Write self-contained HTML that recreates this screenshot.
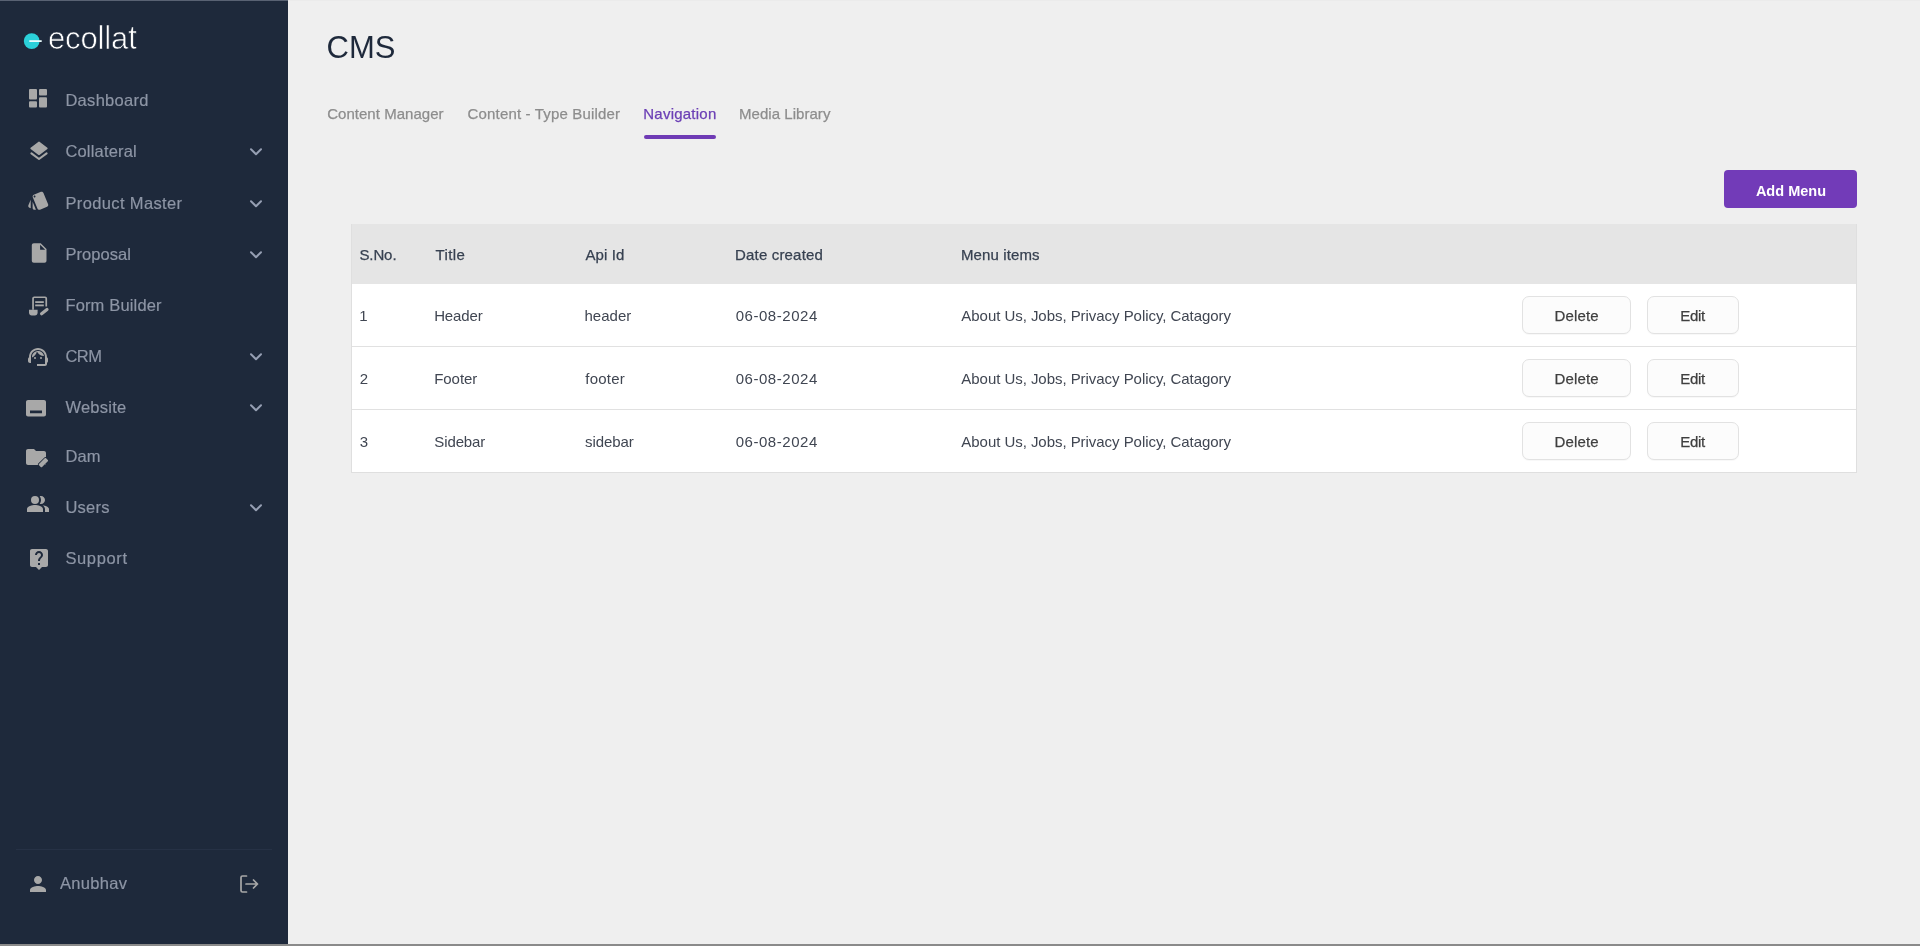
<!DOCTYPE html>
<html lang="en">
<head>
<meta charset="utf-8">
<title>CMS - Navigation</title>
<style>
*{box-sizing:border-box;margin:0;padding:0}
html,body{width:1920px;height:946px;overflow:hidden}
body{font-family:"Liberation Sans",Arial,sans-serif;background:#efefef;position:relative;color:#1f2937}
.topline{position:absolute;left:0;top:0;width:288px;height:1px;background:#596273;z-index:5}
.topline2{position:absolute;left:288px;top:0;width:1632px;height:1px;background:#ebebeb;z-index:5}
.botline{position:absolute;left:0;top:944.400px;width:1920px;height:1.600px;background:#8a8a8a;z-index:5}
.side{will-change:transform;position:absolute;left:0;top:0;width:288px;height:946px;background:#1e293b}
.logo{position:absolute;left:0;top:0}
.brand{position:absolute;left:48px;top:19px;height:40px;font-size:31px;line-height:40px;color:#fff;white-space:nowrap;-webkit-text-stroke:.7px #1e293b;letter-spacing:-.15px}
.brand span{display:inline-block}
.brand .tl{transform:scaleY(1.07);transform-origin:50% 79.500%}
.nav{position:absolute;left:0;width:288px;height:24px;color:#8d95a5;font-size:16.5px;line-height:24px;white-space:nowrap}
.nav svg.ic{position:absolute;left:26px;top:0;width:24px;height:24px;fill:#a8a8a8}
.nav span{position:absolute;left:65.4px;top:-1px;-webkit-text-stroke:.18px #8d95a5}
.nav svg.ch{position:absolute;left:248.050px;top:3.900px;width:16px;height:16px;fill:none;stroke:#969fb3;stroke-width:2;stroke-linecap:round;stroke-linejoin:round}
.divider{position:absolute;left:16px;top:849px;width:256px;height:1px;background:#263145}
.user{position:absolute;left:0;top:872px;width:288px;height:24px;color:#8d95a5;font-size:16.5px;line-height:24px}
.main{will-change:transform;position:absolute;left:288px;top:0;width:1632px;height:946px}
h1{position:absolute;font-size:31px;line-height:40px;font-weight:400;color:#1e293b;white-space:nowrap}
.tabs{position:absolute;left:39px;top:104px;height:36px;font-size:15px;color:#8d8d8d;white-space:nowrap}
.tab{position:absolute;line-height:20px;-webkit-text-stroke:.25px #8d8d8d}
.tab.act{color:#6b3fb5;-webkit-text-stroke:.25px #6b3fb5}
.tab.act i{position:absolute;left:.55px;width:71.900px;top:30.900px;height:3.400px;border-radius:2px;background:#6f3bb5}
.btn-add{position:absolute;left:1436px;top:170.200px;width:133px;height:37.800px;border-radius:4px;background:#723bb8;color:#fff;font-weight:700;font-size:14.5px;line-height:40px;white-space:nowrap}
.btn-add span{position:absolute}
.table{position:absolute;left:63px;top:224px;width:1506px;height:249px;border:1px solid #dfdfdf;background:#fff}
.thead{position:absolute;left:0;top:-1px;width:1504px;height:60px;background:#e5e5e5;color:#374151;font-size:15px}
.thead .c{-webkit-text-stroke:.25px #374151}
.row{position:absolute;left:0;width:1504px;height:63px;border-bottom:1px solid #e1e1e1;font-size:15px;color:#404652}
.row.last{border-bottom:0;height:62px}
.c{position:absolute;line-height:20px;white-space:nowrap}
.b{position:absolute;top:12.100px;height:37.900px;border:1px solid #e2e2e2;border-radius:7px;background:#fcfcfc;box-shadow:0 1px 1px rgba(0,0,0,.03);line-height:38px;font-size:15px;color:#3f3f3f;white-space:nowrap}
.b span{position:absolute;-webkit-text-stroke:.25px #3f3f3f}
</style>
</head>
<body>
<div class="side">
<svg class="logo" width="60" height="70" viewBox="0 0 60 70">
<circle cx="31.700" cy="41.100" r="7.900" fill="#2bd0d9"/>
<rect x="29.300" y="40.200" width="12.400" height="1.800" fill="#e9fbfc"/>
</svg>
<div class="brand"><span>eco</span><span class="tl">ll</span><span>a</span><span class="tl">t</span></div>
<div class="nav" style="top:89px"><svg class="ic" style="left:26.4px;top:-2.7px" viewBox="0 0 24 24"><rect x="3" y="3" width="8" height="10.400" rx="1"/><rect x="3" y="15.200" width="8" height="6.300" rx="1"/><rect x="13" y="3" width="8" height="6.400" rx="1"/><rect x="13" y="11.300" width="8" height="10.200" rx="1"/></svg><span style="letter-spacing:0.3px">Dashboard</span></div>
<div class="nav" style="top:140px"><svg class="ic" style="left:26.6px;top:-0.7px" viewBox="0 0 24 24"><path d="M12 3.300L19.900 9.300 12 15.300 4.100 9.300z" stroke="#a8a8a8" stroke-width="1.500" stroke-linejoin="round"/><path d="M4.400 14.300L12 20 19.600 14.300" fill="none" stroke="#a8a8a8" stroke-width="2.100" stroke-linecap="round" stroke-linejoin="round"/></svg><span style="letter-spacing:0.18px">Collateral</span><svg class="ch" viewBox="0 0 16 16"><path d="M3 5.2l5 5 5-5"/></svg></div>
<div class="nav" style="top:192px"><svg class="ic" style="left:26.9px;top:-3.1px;width:23px;height:23px" viewBox="0 0 24 24"><path d="M2.53 19.65l1.34.56v-9.03l-2.43 5.86c-.41 1.02.08 2.19 1.09 2.61zM5.88 19.75c0 1.1.9 2 2 2h1.45l-3.45-8.34v6.340z"/><path stroke="#1e293b" stroke-width="1.300" paint-order="stroke fill" fill-rule="evenodd" d="M22.030 15.950L17.070 3.980c-.310-.750-1.040-1.210-1.810-1.230-.260 0-.530.040-.790.150L7.100 5.950c-.750.310-1.210 1.030-1.230 1.800-.010.270.040.540.150.800l4.960 11.970c.310.760 1.050 1.220 1.830 1.230.260 0 .520-.050.770-.150l7.360-3.050c1.020-.420 1.510-1.590 1.090-2.600zM7.880 8.750c-.550 0-1-.450-1-1s.450-1 1-1 1 .450 1 1-.450 1-1 1z"/></svg><span style="letter-spacing:0.37px">Product Master</span><svg class="ch" viewBox="0 0 16 16"><path d="M3 5.2l5 5 5-5"/></svg></div>
<div class="nav" style="top:243px"><svg class="ic" style="left:26.6px;top:-2px" viewBox="0 0 24 24"><path d="M6.800 2.200c-1.100 0-2 .9-2 2v15.600c0 1.100.9 2 2 2h10.700c1.100 0 2-.9 2-2V8l-5.800-5.800H6.800zm6.300 6.600V3.700l5.100 5.100h-5.100z"/></svg><span style="letter-spacing:0.05px">Proposal</span><svg class="ch" viewBox="0 0 16 16"><path d="M3 5.2l5 5 5-5"/></svg></div>
<div class="nav" style="top:294px"><svg class="ic" style="left:26px;top:0px" viewBox="0 0 24 24"><path fill="none" stroke="#a8a8a8" stroke-width="1.700" d="M7.050 15.800V4.400c0-.65.5-1.150 1.150-1.150h10.900c.65 0 1.150.5 1.150 1.150v8.100"/><rect x="9.200" y="7.200" width="8.600" height="1.800"/><rect x="9.200" y="10.500" width="8.600" height="1.800"/><path d="M3 15.800h8.600v3c0 1.500-1.200 2.700-2.700 2.700H5.700C4.200 21.500 3 20.300 3 18.800z"/><path fill="none" stroke="#a8a8a8" stroke-width="3.200" stroke-linecap="round" d="M15.600 19.800L21 15.500"/></svg><span style="letter-spacing:0.16px">Form Builder</span></div>
<div class="nav" style="top:345px"><svg class="ic" style="left:26px;top:0px" viewBox="0 0 24 24"><path d="M21 12.220C21 6.730 16.740 3 12 3c-4.690 0-9 3.650-9 9.280-.6.340-1 .980-1 1.720v2c0 1.100.9 2 2 2h1v-6.100c0-3.870 3.130-7 7-7s7 3.130 7 7V19h-8v2h8c1.100 0 2-.9 2-2v-1.220c.590-.310 1-.920 1-1.640v-2.300c0-.7-.410-1.310-1-1.620z"/><circle cx="9" cy="13" r="1"/><circle cx="15" cy="13" r="1"/><path d="M18 11.030C17.520 8.180 15.040 6 12.050 6c-3.030 0-6.290 2.510-6.030 6.450 2.470-1.010 4.330-3.210 4.860-5.890 1.310 2.630 4 4.440 7.120 4.470z"/></svg><span style="letter-spacing:-0.5px">CRM</span><svg class="ch" viewBox="0 0 16 16"><path d="M3 5.2l5 5 5-5"/></svg></div>
<div class="nav" style="top:396px"><svg class="ic" style="left:26px;top:-0.4px" viewBox="0 0 24 24"><path fill-rule="evenodd" d="M2 4h16c1.100 0 2 .9 2 2v12.500c0 1.100-.9 2-2 2H2c-1.100 0-2-.9-2-2V6c0-1.100.9-2 2-2zm2 10.500v2.800h12v-2.800z"/></svg><span style="letter-spacing:0.25px">Website</span><svg class="ch" viewBox="0 0 16 16"><path d="M3 5.2l5 5 5-5"/></svg></div>
<div class="nav" style="top:445px"><svg class="ic" style="left:24px;top:0.2px" viewBox="0 0 24 24"><path d="M10 4H4c-1.100 0-1.990.9-1.990 2L2 18c0 1.100.9 2 2 2h18V8c0-1.100-.9-2-2-2h-8l-2-2z"/><path stroke="#1e293b" stroke-width="1.500" paint-order="stroke fill" d="M22.100 13.200l1.700 1.700c.4.400.4 1 0 1.400l-5.700 5.700c-.4.400-1 .4-1.400 0L15 20.300c-.4-.4-.4-1 0-1.400l5.700-5.700c.4-.4 1-.4 1.400 0z"/></svg><span style="letter-spacing:0.1px">Dam</span></div>
<div class="nav" style="top:496px"><svg class="ic" style="left:26px;top:-4px" viewBox="0 0 24 24"><path d="M16.670 13.130C18.040 14.060 19 15.320 19 17v3h4v-3c0-2.180-3.570-3.470-6.330-3.870z"/><circle cx="9" cy="8" r="4"/><path d="M15 12c2.210 0 4-1.790 4-4s-1.790-4-4-4c-.470 0-.910.100-1.330.240C14.500 5.270 15 6.580 15 8s-.5 2.730-1.330 3.760c.420.140.860.240 1.330.240zM9 13c-2.670 0-8 1.340-8 4v3h16v-3c0-2.660-5.330-4-8-4z"/></svg><span style="letter-spacing:0.25px">Users</span><svg class="ch" viewBox="0 0 16 16"><path d="M3 5.2l5 5 5-5"/></svg></div>
<div class="nav" style="top:547px"><svg class="ic" style="left:26.5px;top:-0.1px" viewBox="0 0 24 24"><path d="M19 2H5c-1.110 0-2 .9-2 2v14c0 1.100.89 2 2 2h4l3 3 3-3h4c1.100 0 2-.9 2-2V4c0-1.100-.9-2-2-2zm-6 16h-2v-2h2v2zm2.070-7.750l-.9.920C13.450 11.900 13 12.500 13 14h-2v-.5c0-1.100.450-2.100 1.170-2.830l1.240-1.260c.370-.360.590-.860.590-1.410 0-1.100-.9-2-2-2s-2 .9-2 2H8c0-2.210 1.790-4 4-4s4 1.790 4 4c0 .880-.360 1.680-.930 2.250z"/></svg><span style="letter-spacing:0.65px">Support</span></div>
<div class="divider"></div>
<div class="user"><svg class="ic" viewBox="0 0 24 24" style="position:absolute;left:26px;top:0;width:24px;height:24px;fill:#a8a8a8"><path d="M12 12c2.210 0 4-1.790 4-4s-1.790-4-4-4-4 1.790-4 4 1.790 4 4 4zm0 2c-2.670 0-8 1.340-8 4v2h16v-2c0-2.660-5.330-4-8-4z"/></svg><span style="position:absolute;left:60px;top:-1px;letter-spacing:.3px;-webkit-text-stroke:.18px #8d95a5">Anubhav</span><svg viewBox="0 0 24 24" style="position:absolute;left:237px;top:0;width:24px;height:24px;fill:none;stroke:#a8a8a8;stroke-width:1.700;stroke-linecap:round;stroke-linejoin:round"><path d="M9.500 4H5.500c-.8 0-1.500.7-1.500 1.500v13c0 .8.700 1.500 1.500 1.500h4M9 12h11.500M16.500 8l4 4-4 4"/></svg></div>
</div>
<div class="main">
<!--MAIN-->
<h1 id="h1" style="left:38.61px;top:28.2px;letter-spacing:-0.055px">CMS</h1>
<div class="tabs"><div class="tab" id="t1" style="left:0.18px;top:0.4px;letter-spacing:0.033px">Content Manager</div><div class="tab" id="t2" style="left:140.55px;top:0.4px;letter-spacing:0.167px">Content - Type Builder</div><div class="tab act" id="t3" style="left:316.28px;top:0.4px;letter-spacing:0.231px">Navigation<i></i></div><div class="tab" id="t4" style="left:412.05px;top:0.4px;letter-spacing:0.039px">Media Library</div></div>
<div class="btn-add"><span id="add" style="left:31.9px;top:0.5px;letter-spacing:0.006px">Add Menu</span></div>
<div class="table"><div class="thead"><div class="c" id="h_a" style="left:7.38px;top:21px;letter-spacing:-0.086px">S.No.</div><div class="c" id="h_b" style="left:83.39px;top:21px;letter-spacing:0.412px">Title</div><div class="c" id="h_c" style="left:233.39px;top:21px;letter-spacing:0.102px">Api Id</div><div class="c" id="h_d" style="left:383.1px;top:21px;letter-spacing:0.167px">Date created</div><div class="c" id="h_e" style="left:608.91px;top:21px;letter-spacing:0.128px">Menu items</div></div><div class="row" style="top:59px"><div class="c" id="r0a" style="left:7.26px;top:22px;letter-spacing:0.0px">1</div><div class="c" id="r0b" style="left:82.17px;top:22px;letter-spacing:-0.116px">Header</div><div class="c" id="r0c" style="left:232.43px;top:22px;letter-spacing:0.047px">header</div><div class="c" id="r0d" style="left:383.65px;top:22px;letter-spacing:0.552px">06-08-2024</div><div class="c" id="r0e" style="left:609.35px;top:22px;letter-spacing:-0.046px">About Us, Jobs, Privacy Policy, Catagory</div><div class="b" style="left:1170.25px;width:108.4px"><span id="r0f" style="left:31.16px;top:0px;letter-spacing:0.169px">Delete</span></div><div class="b" style="left:1295.25px;width:91.5px"><span id="r0g" style="left:31.91px;top:0px;letter-spacing:-0.242px">Edit</span></div></div><div class="row" style="top:122px"><div class="c" id="r1a" style="left:7.86px;top:22px;letter-spacing:0.0px">2</div><div class="c" id="r1b" style="left:82.17px;top:22px;letter-spacing:-0.03px">Footer</div><div class="c" id="r1c" style="left:233.37px;top:22px;letter-spacing:0.2px">footer</div><div class="c" id="r1d" style="left:383.65px;top:22px;letter-spacing:0.552px">06-08-2024</div><div class="c" id="r1e" style="left:609.35px;top:22px;letter-spacing:-0.046px">About Us, Jobs, Privacy Policy, Catagory</div><div class="b" style="left:1170.25px;width:108.4px"><span id="r1f" style="left:31.16px;top:0px;letter-spacing:0.169px">Delete</span></div><div class="b" style="left:1295.25px;width:91.5px"><span id="r1g" style="left:31.91px;top:0px;letter-spacing:-0.242px">Edit</span></div></div><div class="row last" style="top:185px"><div class="c" id="r2a" style="left:7.69px;top:22px;letter-spacing:0.0px">3</div><div class="c" id="r2b" style="left:82.33px;top:22px;letter-spacing:-0.127px">Sidebar</div><div class="c" id="r2c" style="left:232.99px;top:22px;letter-spacing:-0.052px">sidebar</div><div class="c" id="r2d" style="left:383.65px;top:22px;letter-spacing:0.552px">06-08-2024</div><div class="c" id="r2e" style="left:609.35px;top:22px;letter-spacing:-0.046px">About Us, Jobs, Privacy Policy, Catagory</div><div class="b" style="left:1170.25px;width:108.4px"><span id="r2f" style="left:31.16px;top:0px;letter-spacing:0.169px">Delete</span></div><div class="b" style="left:1295.25px;width:91.5px"><span id="r2g" style="left:31.91px;top:0px;letter-spacing:-0.242px">Edit</span></div></div></div>
<!--/MAIN-->
</div>
<div class="topline"></div><div class="topline2"></div>
<div class="botline"></div>
</body>
</html>
